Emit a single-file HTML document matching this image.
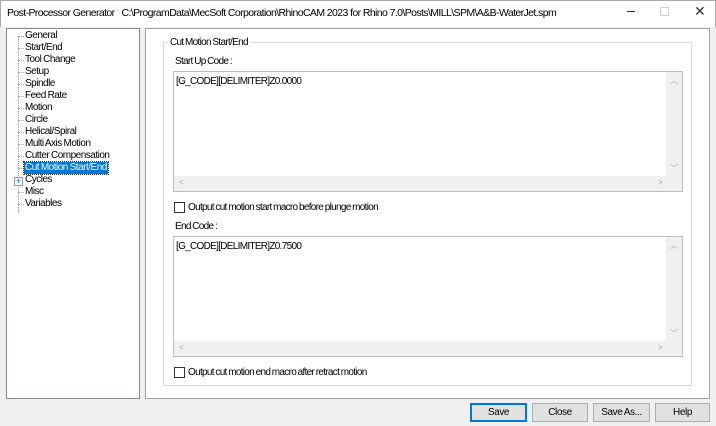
<!DOCTYPE html><html><head><style>
*{margin:0;padding:0;box-sizing:border-box}
body{width:716px;height:426px;background:#f0f0f0;font-family:"Liberation Sans",sans-serif;font-size:10px;color:#000;position:relative;overflow:hidden;letter-spacing:-0.7px;word-spacing:-0.5px}
.a{position:absolute;white-space:nowrap}
.title{left:0;top:0;width:716px;height:27px;background:#fff;border:1px solid #aaa;border-bottom:none}
.tree{left:6px;top:28px;width:134px;height:371px;background:#fff;border:1px solid #828790}
.right{left:145px;top:28px;width:565px;height:371px;background:#fff;border:1px solid #a0a0a0}
.grp{left:163px;top:42px;width:529px;height:344px;border:1px solid #dcdcdc}
.ta{left:173px;width:510px;height:121px;border:1px solid #bcbcbc;background:#fff}
.vs{right:0;top:0;width:16px;bottom:15px;background:#f0f0f0}
.hs{left:0;right:0;bottom:0;height:15px;background:#f0f0f0}
.ar{color:#a0a0a0;font-size:8px}
.cb{width:11px;height:11px;border:1px solid #333;background:#fff}
.btn{top:403px;height:19px;background:#e1e1e1;border:1px solid #adadad;text-align:center;line-height:17px;letter-spacing:-0.4px}
.it{position:absolute;left:18px;height:12px;line-height:12px;white-space:nowrap;letter-spacing:-0.5px}
.ln{position:absolute;left:11px;width:6px;border-top:1px dotted #a0a0a0}
</style></head><body>
<div class="a title"></div>
<div class="a" style="left:7px;top:7px;font-size:10.5px;letter-spacing:-0.6px;word-spacing:0">Post-Processor Generator&nbsp;&nbsp; C:\ProgramData\MecSoft Corporation\RhinoCAM 2023 for Rhino 7.0\Posts\MILL\SPM\A&amp;B-WaterJet.spm</div>
<div class="a" style="left:627px;top:11px;width:8px;border-top:1px solid #333"></div>
<div class="a" style="left:660px;top:7px;width:9px;height:9px;border:1px solid #ccc"></div>
<div class="a" style="left:694px;top:3px;font-size:14px;color:#333">✕</div>
<div class="a tree">
<div class="a" style="left:11px;top:7px;height:176px;border-left:1px dotted #a0a0a0"></div>
<div class="ln" style="top:7px"></div><div class="it" style="top:1px">General</div>
<div class="ln" style="top:19px"></div><div class="it" style="top:13px">Start/End</div>
<div class="ln" style="top:31px"></div><div class="it" style="top:25px">Tool Change</div>
<div class="ln" style="top:43px"></div><div class="it" style="top:37px">Setup</div>
<div class="ln" style="top:55px"></div><div class="it" style="top:49px">Spindle</div>
<div class="ln" style="top:67px"></div><div class="it" style="top:61px">Feed Rate</div>
<div class="ln" style="top:79px"></div><div class="it" style="top:73px">Motion</div>
<div class="ln" style="top:91px"></div><div class="it" style="top:85px">Circle</div>
<div class="ln" style="top:103px"></div><div class="it" style="top:97px">Helical/Spiral</div>
<div class="ln" style="top:115px"></div><div class="it" style="top:109px">Multi Axis Motion</div>
<div class="ln" style="top:127px"></div><div class="it" style="top:121px">Cutter Compensation</div>
<div class="ln" style="top:139px"></div><div class="it" style="top:133px;left:17px;padding:0 1px;background:#0078d7;color:#fff;outline:1px dotted #333">Cut Motion Start/End</div>
<div class="it" style="top:145px">Cycles</div>
<div class="a" style="left:7px;top:148px;width:9px;height:9px;border:1px solid #999;background:#fff;font-size:9px;line-height:7px;text-align:center;color:#1a5ad0;letter-spacing:0">+</div>
<div class="ln" style="top:163px"></div><div class="it" style="top:157px">Misc</div>
<div class="ln" style="top:175px"></div><div class="it" style="top:169px">Variables</div>
</div>
<div class="a right"></div>
<div class="a grp"></div>
<div class="a" style="left:168px;top:37px;background:#fff;padding:0 2px">Cut Motion Start/End</div>
<div class="a" style="left:175px;top:56px">Start Up Code :</div>
<div class="a ta" style="top:71px"><div class="a" style="left:2px;top:4px">[G_CODE][DELIMITER]Z0.0000</div>
<div class="a vs"><div class="a ar" style="left:4px;top:3px">︿</div><div class="a ar" style="left:4px;bottom:2px">﹀</div></div>
<div class="a hs"><div class="a ar" style="left:5px;top:2px">&lt;</div><div class="a ar" style="right:20px;top:2px">&gt;</div></div></div>
<div class="a cb" style="left:174px;top:202px"></div>
<div class="a" style="left:188px;top:202px">Output cut motion start macro before plunge motion</div>
<div class="a" style="left:175px;top:221px">End Code :</div>
<div class="a ta" style="top:236px"><div class="a" style="left:2px;top:4px">[G_CODE][DELIMITER]Z0.7500</div>
<div class="a vs"><div class="a ar" style="left:4px;top:3px">︿</div><div class="a ar" style="left:4px;bottom:2px">﹀</div></div>
<div class="a hs"><div class="a ar" style="left:5px;top:2px">&lt;</div><div class="a ar" style="right:20px;top:2px">&gt;</div></div></div>
<div class="a cb" style="left:174px;top:367px"></div>
<div class="a" style="left:188px;top:367px">Output cut motion end macro after retract motion</div>
<div class="a btn" style="left:470px;width:57px;border:1px solid #0078d7;box-shadow:inset 0 0 0 1px #0078d7">Save</div>
<div class="a btn" style="left:532px;width:56px">Close</div>
<div class="a btn" style="left:593px;width:57px">Save As...</div>
<div class="a btn" style="left:655px;width:55px">Help</div>
</body></html>
